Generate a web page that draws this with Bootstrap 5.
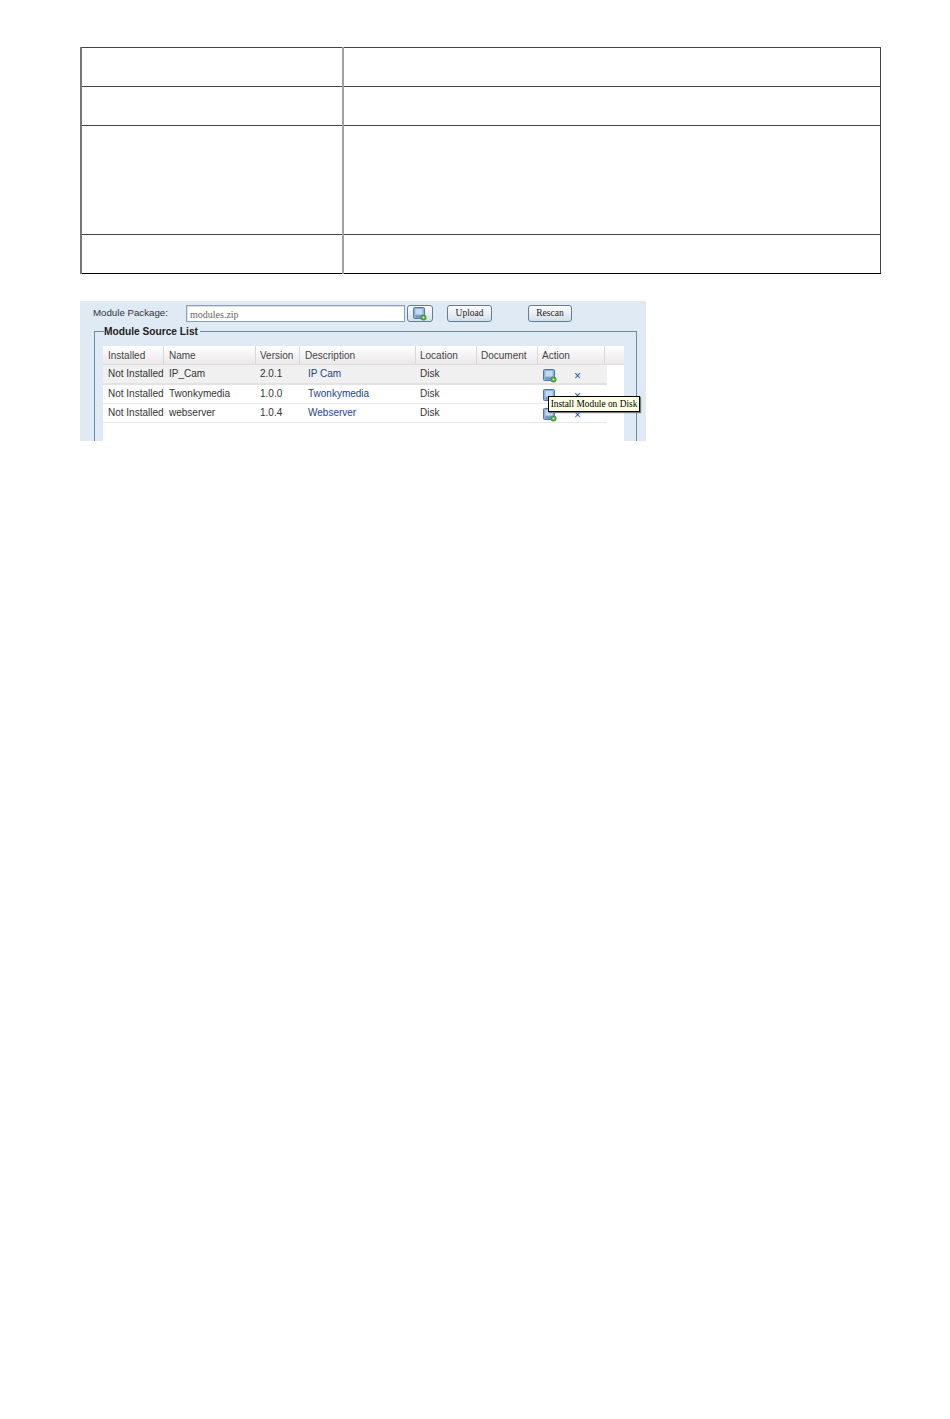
<!DOCTYPE html>
<html lang="en">
<head>
<meta charset="UTF-8">
<meta name="viewport" content="width=device-width, initial-scale=1">
<title>Module Source List</title>
<link href="https://cdn.jsdelivr.net/npm/bootstrap@5.3.3/dist/css/bootstrap.min.css" rel="stylesheet">
<style>
body { background: #fff; font-family: "Liberation Sans", sans-serif; }
.page-wrap { padding: 47px 0 0 80px; }
.blank-table { width: 801px; margin: 0; table-layout: fixed; border-collapse: collapse; }
.blank-table td { border: 1px solid #444; padding: 0; }
.blank-table td:first-child { width: 262px; border-left: 2px solid #777; border-right: 2px solid #a0a0a0; }
.blank-table tr:nth-child(4) td { border-top-color: #000; border-bottom-color: #000; }
.rh-s { height: 39px; }
.rh-l { height: 109px; }
.module-panel { position: relative; width: 566px; height: 140px; margin-top: 27px; background: #dfeaf5; overflow: hidden; color: #333; font-size: 10px; }
.pkg-bar { height: 25px; padding: 4px 0 0 13px; }
.pkg-label { width: 93px; font-size: 9.7px; line-height: 16px; }
.pkg-input { width: 219px; height: 17px; background: #fff; border: 1px solid #8ba0b2; padding: 1px 3px; font: 10px "Liberation Serif", serif; color: #666; line-height: 15px; box-shadow: inset 1px 1px 1px #ddd; }
.skin-btn { height: 17px; border: 1px solid #5c7f9b; border-radius: 3px; background: linear-gradient(#fff, #d5dee6); font: 9.5px/17px "Liberation Serif", serif; color: #222; padding: 0; text-align: center; display: flex; align-items: center; justify-content: center; }
.btn-browse { width: 26px; margin-left: 2px; }
.btn-upload { width: 45px; margin-left: 14px; }
.btn-rescan { width: 44px; margin-left: 36px; }
.src-set { margin: 0 9px 0 14px; padding: 0 0 0 8px; border: 1px solid #6d8b98; height: 130px; min-width: 0; }
.src-set legend { float: none; width: auto; margin: 0 0 0 1px; padding: 0 2px 0 0; font-size: 10.2px; font-weight: 700; line-height: 11px; color: #222; }
.grid-box { width: 521px; height: 110px; margin-top: 9px; background: #fff; }
.grid-head { display: flex; height: 19px; background: linear-gradient(#fff, #ebe8ea); border-bottom: 1px solid #ddd; }
.grid-head span { padding-left: 4px; border-right: 1px solid #d6d9dd; line-height: 20px; color: #444; }
.grid-row { display: flex; width: 504px; height: 19px; border-bottom: 1px solid #e6e9ec; line-height: 18px; }
.grid-row.sel { background: #f0f0f0; border-bottom: 2px solid #e2e2e2; height: 20px; }
.grid-row span { padding-left: 4px; white-space: nowrap; }
.grid-head .c1, .grid-row .c1, .grid-head .c2, .grid-row .c2, .grid-head .c4 { padding-left: 5px; }
.c1 { width: 61px; }
.c2 { width: 92px; }
.c3 { width: 44px; }
.c4 { width: 116px; }
.c5 { width: 61px; }
.c6 { width: 61px; }
.c7 { width: 67px; }
.desc-link { color: #1c4587; padding-left: 8px !important; }
.act-cell { display: flex; align-items: center; padding-left: 5px !important; padding-top: 3px; }
.del-x { color: #1a55a8; font-size: 12px; margin-left: 17px; line-height: 12px; font-weight: 400; }
.tip-box { position: absolute; left: 468px; top: 95px; width: 92px; height: 16px; background: #ffffe6; border: 1px solid #000; box-shadow: 1px 1px 1px #777; font: 9.4px/14px "Liberation Serif", serif; color: #000; text-align: center; white-space: nowrap; }
</style>
</head>
<body>
<div class="page-wrap">
  <table class="table blank-table">
    <tbody>
      <tr class="rh-s"><td></td><td></td></tr>
      <tr class="rh-s"><td></td><td></td></tr>
      <tr class="rh-l"><td></td><td></td></tr>
      <tr class="rh-s"><td></td><td></td></tr>
    </tbody>
  </table>

  <div class="module-panel">
    <svg width="0" height="0" class="d-block">
      <defs>
        <symbol id="disk-add" viewBox="0 0 14 14">
          <rect x="0.5" y="0.5" width="11" height="11" rx="1" fill="#8fb2d8" stroke="#4a78b0"/>
          <rect x="2.5" y="2" width="7" height="5.5" fill="#c2d9ef"/>
          <rect x="2.5" y="8.5" width="7" height="2" fill="#6a94c4"/>
          <circle cx="10.5" cy="10.5" r="3" fill="#4f9a3a"/>
          <circle cx="10.5" cy="10.5" r="1.1" fill="#e9f6e2"/>
        </symbol>
      </defs>
    </svg>
    <div class="pkg-bar d-flex align-items-start">
      <div class="pkg-label">Module Package:</div>
      <div class="pkg-input">modules.zip</div>
      <button type="button" class="skin-btn btn-browse"><svg width="14" height="14"><use href="#disk-add"/></svg></button>
      <button type="button" class="skin-btn btn-upload">Upload</button>
      <button type="button" class="skin-btn btn-rescan">Rescan</button>
    </div>
    <fieldset class="src-set">
      <legend>Module Source List</legend>
      <div class="grid-box">
        <div class="grid-head">
          <span class="c1">Installed</span><span class="c2">Name</span><span class="c3">Version</span><span class="c4">Description</span><span class="c5">Location</span><span class="c6">Document</span><span class="c7">Action</span>
        </div>
        <div class="grid-row sel">
          <span class="c1">Not Installed</span><span class="c2">IP_Cam</span><span class="c3">2.0.1</span><span class="c4 desc-link">IP Cam</span><span class="c5">Disk</span><span class="c6"></span>
          <span class="c7 act-cell"><svg width="14" height="14"><use href="#disk-add"/></svg><b class="del-x">×</b></span>
        </div>
        <div class="grid-row">
          <span class="c1">Not Installed</span><span class="c2">Twonkymedia</span><span class="c3">1.0.0</span><span class="c4 desc-link">Twonkymedia</span><span class="c5">Disk</span><span class="c6"></span>
          <span class="c7 act-cell"><svg width="14" height="14"><use href="#disk-add"/></svg><b class="del-x">×</b></span>
        </div>
        <div class="grid-row">
          <span class="c1">Not Installed</span><span class="c2">webserver</span><span class="c3">1.0.4</span><span class="c4 desc-link">Webserver</span><span class="c5">Disk</span><span class="c6"></span>
          <span class="c7 act-cell"><svg width="14" height="14"><use href="#disk-add"/></svg><b class="del-x">×</b></span>
        </div>
      </div>
    </fieldset>
    <div class="tip-box">Install Module on Disk</div>
  </div>
</div>
<script src="https://cdn.jsdelivr.net/npm/bootstrap@5.3.3/dist/js/bootstrap.bundle.min.js"></script>
</body>
</html>
